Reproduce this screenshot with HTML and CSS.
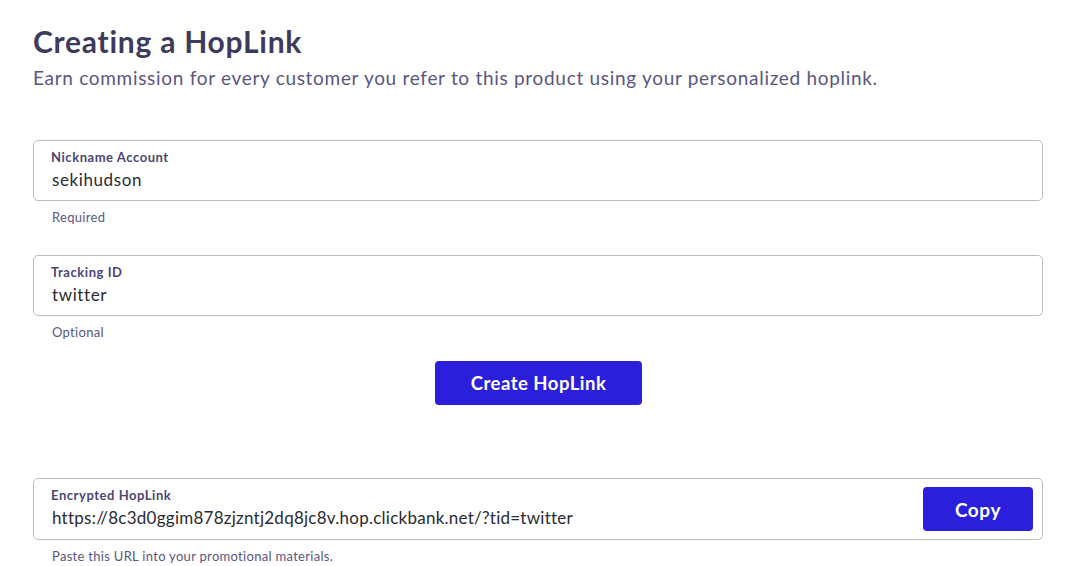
FILE: index.html
```html
<!DOCTYPE html>
<html lang="en">
<head>
<meta charset="utf-8">
<title>Creating a HopLink</title>
<link rel="stylesheet" href="styles.css">
</head>
<body>
<main class="page">
  <header class="intro">
    <h1 class="title">Creating a HopLink</h1>
    <p class="subtitle">Earn commission for every customer you refer to this product using your personalized hoplink.</p>
  </header>

  <form class="form">
    <div class="field">
      <label class="box">
        <span class="label">Nickname Account</span>
        <span class="value">sekihudson</span>
      </label>
      <p class="helper">Required</p>
    </div>

    <div class="field">
      <label class="box">
        <span class="label">Tracking ID</span>
        <span class="value">twitter</span>
      </label>
      <p class="helper">Optional</p>
    </div>

    <div class="actions">
      <button type="button" class="btn btn-create">Create HopLink</button>
    </div>

    <div class="field field-result">
      <div class="box box-result">
        <div class="result-text">
          <span class="label">Encrypted HopLink</span>
          <span class="value value-url">https://8c3d0ggim878zjzntj2dq8jc8v.hop.clickbank.net/?tid=twitter</span>
        </div>
        <button type="button" class="btn btn-copy">Copy</button>
      </div>
      <p class="helper">Paste this URL into your promotional materials.</p>
    </div>
  </form>
</main>
</body>
</html>
```

FILE: styles.css
```css
* { box-sizing: border-box; }

html, body {
  margin: 0;
  padding: 0;
  background: #ffffff;
}

body {
  font-family: "Lato", "Noto Sans", Arial, sans-serif;
  color: #3c3a5a;
}

.page {
  width: 1010px;
  margin-left: 33px;
  padding-top: 22px;
}

.title {
  margin: 0;
  font-size: 30px;
  line-height: 38px;
  font-weight: 700;
  color: #3d3a5b;
  letter-spacing: 0.75px;
}

.subtitle {
  margin: 5px 0 0;
  font-size: 19px;
  line-height: 26px;
  color: #5a5680;
  letter-spacing: 0.7px;
}

.form {
  margin-top: 49px;
  display: flex;
  flex-direction: column;
}

.field + .field { margin-top: 30px; }

.box {
  display: flex;
  flex-direction: column;
  height: 61px;
  padding: 8px 18px 0;
  border: 1px solid #bebbc8;
  border-radius: 5px;
}

.label {
  margin-left: -1px;
  font-size: 13px;
  line-height: 16px;
  font-weight: 700;
  color: #4b4673;
  letter-spacing: 0.55px;
}

.value {
  margin-top: 3px;
  font-size: 17px;
  line-height: 24px;
  color: #2b2b33;
  letter-spacing: 0.6px;
}

.value-url { letter-spacing: 0.25px; }

.helper {
  margin: 8px 0 0 19px;
  font-size: 13px;
  line-height: 16px;
  color: #5a5680;
  letter-spacing: 0.3px;
}

.actions {
  display: flex;
  justify-content: center;
  margin-top: 21px;
}

.btn {
  border: none;
  border-radius: 4px;
  background: #2c1fdc;
  color: #ffffff;
  font-family: inherit;
  font-weight: 700;
  cursor: pointer;
}

.btn-create {
  width: 207px;
  height: 44px;
  margin-left: 1px;
  font-size: 18.5px;
  letter-spacing: 0.5px;
}

.field-result { margin-top: 73px; }

.box-result {
  flex-direction: row;
  align-items: center;
  height: 62px;
  padding: 0 9px 0 18px;
}

.result-text {
  flex: 1;
  display: flex;
  flex-direction: column;
  align-self: flex-start;
  padding-top: 8px;
}

.btn-copy {
  width: 110px;
  height: 44px;
  font-size: 19px;
  letter-spacing: 0.6px;
}
```
